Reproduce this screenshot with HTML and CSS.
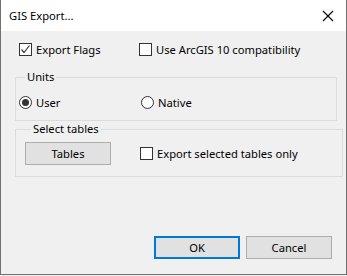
FILE: index.html
```html
<!DOCTYPE html>
<html lang="en">

<head>
      <meta charset="UTF-8">
      <title>GIS Export...</title>
      <link rel="stylesheet" href="styles.css">
</head>

<body>
      <div class="window">
            <div class="titlebar">
                  <span class="title">GIS Export...</span>
                  <svg class="close" width="12" height="12" viewBox="0 0 12 12">
                        <path d="M1 1 L11 11 M11 1 L1 11" stroke="#000" stroke-width="1.1" fill="none" />
                  </svg>
            </div>
            <div class="content">
                  <div class="row top-row">
                        <label class="check col-a"><span class="box checked"><svg width="11" height="11" viewBox="0 0 11 11"><path d="M1.5 5.5 L4 8.5 L9.5 1.5" stroke="#3c3c3c" stroke-width="1.2" fill="none" /></svg></span>Export Flags</label>
                        <label class="check"><span class="box"></span>Use ArcGIS 10 compatibility</label>
                  </div>

                  <fieldset class="group units">
                        <legend>Units</legend>
                        <div class="row">
                              <label class="check col-b"><span class="radio on"></span>User</label>
                              <label class="check"><span class="radio"></span>Native</label>
                        </div>
                  </fieldset>

                  <fieldset class="group tables">
                        <legend>Select tables</legend>
                        <div class="row">
                              <button class="btn tables-btn">Tables</button>
                              <label class="check"><span class="box"></span>Export selected tables only</label>
                        </div>
                  </fieldset>

                  <div class="footer">
                        <button class="btn default">OK</button>
                        <button class="btn">Cancel</button>
                  </div>
            </div>
      </div>
</body>

</html>
```

FILE: styles.css
```css
/* Whole page */
body {
      margin: 0;
      background-color: #f0f0f0;
      font-family: "Noto Sans", "Open Sans", sans-serif;
      font-size: 11.2px;
      color: #000;
}

/* Dialog frame */
.window {
      width: 345px;
      height: 274px;
      border: 1px solid #707070;
      border-top: none;
      display: flex;
      flex-direction: column;
}

.titlebar {
      height: 31px;
      background-color: #fff;
      display: flex;
      align-items: center;
      justify-content: space-between;
      padding: 0 12px 0 8px;
}

.title {
      line-height: 16px;
}

.close {
      display: block;
}

.content {
      flex: 1;
      display: flex;
      flex-direction: column;
      background-color: #f0f0f0;
      padding: 10px 0 15px 0;
}

.row {
      display: flex;
      align-items: center;
      height: 17px;
}

.top-row {
      padding-left: 18px;
}

.col-a {
      width: 120px;
}

.col-b {
      width: 122px;
}

/* Checkbox and radio */
.check {
      display: flex;
      align-items: center;
      line-height: 17px;
      white-space: nowrap;
}

.box,
.radio {
      width: 11px;
      height: 11px;
      border: 1px solid #333;
      background-color: #fff;
      margin-right: 4px;
      display: flex;
      align-items: center;
      justify-content: center;
      flex-shrink: 0;
}

.radio {
      border-radius: 50%;
}

.radio.on::before {
      content: '';
      width: 7px;
      height: 7px;
      border-radius: 50%;
      background-color: #333;
}

/* Group boxes */
.group {
      width: 317px;
      margin: 0 0 0 14px;
      border: 1px solid #dcdcdc;
      padding: 0 0 0 3px;
}

.group legend {
      margin-left: 6px;
      padding: 0 2px;
      line-height: 16px;
}

.units {
      margin-top: 11px;
      padding-top: 9px;
      padding-bottom: 9px;
}

.tables {
      padding-top: 5px;
      padding-bottom: 11px;
      padding-left: 9px;
}

.tables .row {
      height: 23px;
}

/* Buttons */
.btn {
      width: 86px;
      height: 23px;
      background-color: #e1e1e1;
      border: 1px solid #adadad;
      font-family: inherit;
      font-size: inherit;
      color: #000;
      padding: 0;
}

.btn.default {
      border: 2px solid #0078d7;
}

.tables-btn {
      margin-right: 29px;
}

.footer {
      margin-top: auto;
      display: flex;
      justify-content: flex-end;
      gap: 6px;
      padding-right: 14px;
}
```
